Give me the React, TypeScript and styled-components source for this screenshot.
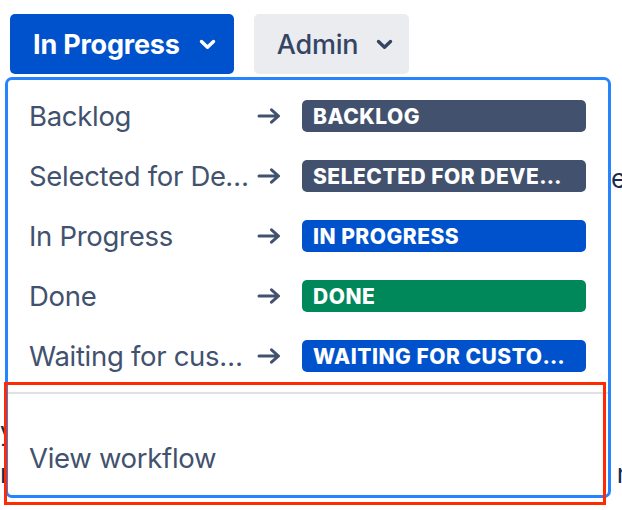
import React from 'react';
import styled, { createGlobalStyle } from 'styled-components';

const GlobalStyle = createGlobalStyle`
  html, body {
    margin: 0;
    padding: 0;
    background: #ffffff;
    overflow: hidden;
  }
  body {
    font-family: 'Inter', 'Noto Sans', 'Liberation Sans', sans-serif;
    -webkit-font-smoothing: antialiased;
  }
`;

type Tone = 'default' | 'progress' | 'success';

interface Transition {
  name: string;
  status: string;
  tone: Tone;
}

const transitions: Transition[] = [
  { name: 'Backlog', status: 'Backlog', tone: 'default' },
  { name: 'Selected for Development', status: 'Selected for Development', tone: 'default' },
  { name: 'In Progress', status: 'In Progress', tone: 'progress' },
  { name: 'Done', status: 'Done', tone: 'success' },
  { name: 'Waiting for customer', status: 'Waiting for customer', tone: 'progress' },
];

const toneColors: Record<Tone, string> = {
  default: '#42526E',
  progress: '#0052CC',
  success: '#00875A',
};

const Chevron = () => (
  <svg width="17" height="11" viewBox="0 0 17 11" fill="none">
    <path
      d="M2.5 2.5 L8.5 8.2 L14.5 2.5"
      stroke="currentColor"
      strokeWidth="3.4"
      strokeLinecap="round"
      strokeLinejoin="round"
    />
  </svg>
);

const Arrow = () => (
  <svg width="24" height="16" viewBox="0 0 24 16" fill="none">
    <path
      d="M2 8 H21.5 M14.5 1.8 L21.5 8 L14.5 14.2"
      stroke="currentColor"
      strokeWidth="3"
      strokeLinecap="round"
      strokeLinejoin="round"
    />
  </svg>
);

const App = () => {
  return (
    <Page>
      <GlobalStyle />
      <Toolbar>
        <StatusButton $primary>
          <ButtonLabel>In Progress</ButtonLabel>
          <Chevron />
        </StatusButton>
        <StatusButton>
          <ButtonLabel>Admin</ButtonLabel>
          <Chevron />
        </StatusButton>
      </Toolbar>

      {/* Page text sitting behind the open menu */}
      <Content>
        <BgLine $top={84}>
          <BgLeft />
          <BgRight>ected</BgRight>
        </BgLine>
        <BgLine $top={211}>
          <BgLeft>y</BgLeft>
          <BgRight>p</BgRight>
        </BgLine>
        <BgLine $top={0}>
          <BgLeft>r</BgLeft>
          <BgRight>n</BgRight>
        </BgLine>
      </Content>

      <Menu>
        <ItemList>
          {transitions.map((t) => (
            <Item key={t.name}>
              <ItemName>{t.name}</ItemName>
              <ArrowWrap>
                <Arrow />
              </ArrowWrap>
              <Lozenge $tone={t.tone}>
                <LozengeText>{t.status}</LozengeText>
              </Lozenge>
            </Item>
          ))}
        </ItemList>
        <Separator />
        <Footer>
          <FooterLink>View workflow</FooterLink>
        </Footer>
      </Menu>

      <Highlight />
    </Page>
  );
};

export default App;

const Page = styled.div`
  position: relative;
  width: 622px;
  height: 510px;
  overflow: hidden;
  padding-top: 14px;
  box-sizing: border-box;
`;

const Toolbar = styled.div`
  display: flex;
  gap: 20px;
  padding-left: 10px;
`;

const StatusButton = styled.button<{ $primary?: boolean }>`
  display: flex;
  align-items: center;
  height: 60px;
  padding: 0 ${(p) => (p.$primary ? '18px' : '16px')} 0 23px;
  gap: ${(p) => (p.$primary ? '19px' : '18px')};
  border: none;
  border-radius: 5px;
  background: ${(p) => (p.$primary ? '#0052CC' : '#EBECF0')};
  color: ${(p) => (p.$primary ? '#ffffff' : '#344563')};
  font-family: 'Inter', 'Noto Sans', sans-serif;
  font-size: 27px;
  font-weight: ${(p) => (p.$primary ? 700 : 500)};
  cursor: pointer;
`;

const ButtonLabel = styled.span`
  letter-spacing: -0.2px;
`;

const Content = styled.div`
  color: #172b4d;
  font-size: 26px;
  line-height: 42px;
`;

const BgLine = styled.div<{ $top: number }>`
  display: flex;
  margin-top: ${(p) => p.$top}px;
  white-space: nowrap;
`;

const BgLeft = styled.span`
  flex: 0 0 4px;
  display: flex;
  justify-content: flex-end;
`;

const BgRight = styled.span`
  margin-left: 607px;
`;

const Menu = styled.div`
  position: absolute;
  top: 77px;
  left: 5px;
  width: 606px;
  height: 421px;
  box-sizing: border-box;
  border: 3px solid #2684ff;
  border-radius: 7px;
  background: #ffffff;
  display: flex;
  flex-direction: column;
`;

const ItemList = styled.div`
  display: flex;
  flex-direction: column;
  padding-top: 6px;
`;

const Item = styled.div`
  display: flex;
  align-items: center;
  height: 60px;
  padding: 0 22px 0 21px;
  color: #42526e;
`;

const ItemName = styled.span`
  flex: 0 0 221px;
  font-size: 27.5px;
  letter-spacing: -0.3px;
  white-space: nowrap;
  overflow: hidden;
  text-overflow: ellipsis;
`;

const ArrowWrap = styled.span`
  display: flex;
  flex: 0 0 24px;
  align-items: center;
  margin-left: 7px;
  color: #42526e;
`;

const Lozenge = styled.span<{ $tone: Tone }>`
  display: flex;
  flex: 0 0 284px;
  box-sizing: border-box;
  align-items: center;
  height: 32px;
  margin-left: 21px;
  padding: 0 17px 0 11px;
  border-radius: 5px;
  background: ${(p) => toneColors[p.$tone]};
  color: #ffffff;
  overflow: hidden;
`;

const LozengeText = styled.span`
  font-size: 21px;
  font-weight: 800;
  text-transform: uppercase;
  letter-spacing: 0.5px;
  white-space: nowrap;
  overflow: hidden;
  text-overflow: ellipsis;
`;

const Separator = styled.div`
  height: 2px;
  margin-top: 6px;
  background: #dfe1e6;
`;

const Footer = styled.div`
  display: flex;
  align-items: center;
  height: 60px;
  margin-top: 34px;
  padding-left: 21px;
`;

const FooterLink = styled.span`
  font-size: 27.5px;
  letter-spacing: -0.3px;
  color: #42526e;
`;

const Highlight = styled.div`
  position: absolute;
  top: 382px;
  left: 4px;
  width: 602px;
  height: 123px;
  box-sizing: border-box;
  border: 3px solid #ff2a00;
  pointer-events: none;
`;
